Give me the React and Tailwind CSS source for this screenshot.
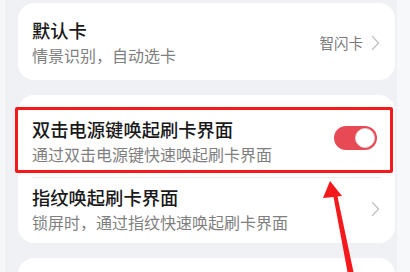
// App.jsx — payment card settings (默认卡 / 刷卡界面)

const font = { fontFamily: '"Noto Sans CJK SC", "Noto Sans", sans-serif' };

// ── Chevron ───────────────────────────────────────────────────────────────────
function Chevron() {
  return (
    <svg className="w-[9px] h-[16px] flex-shrink-0" viewBox="0 0 9 16" fill="none">
      <path
        d="M1.5 1.5L7.5 8L1.5 14.5"
        stroke="#c4c4c4"
        strokeWidth="1.4"
        strokeLinecap="round"
        strokeLinejoin="round"
      />
    </svg>
  );
}

// ── Text block ────────────────────────────────────────────────────────────────
function Texts({ title, sub }) {
  return (
    <div className="flex flex-col gap-[2px]">
      <p className="text-[18.3px] leading-[24px] font-medium text-[#191919]">{title}</p>
      <p className="text-[16px] leading-[22px] text-[#7f7f7f]">{sub}</p>
    </div>
  );
}

export default function App() {
  return (
    <div
      style={font}
      className="relative w-[410px] h-[272px] overflow-hidden pl-[18px] pr-[15px] pt-[3px] flex flex-col gap-[15px]
        bg-[linear-gradient(to_right,#f6f7f9_5px,#eff1f4_5px,#eff1f4_397px,#f7f8fa_397px)]"
    >
      {/* Card 1 */}
      <div className="h-[77px] flex-shrink-0 rounded-[16px] bg-white flex items-center justify-between pl-[14px] pr-[15px]">
        <Texts title="默认卡" sub="情景识别，自动选卡" />
        <div className="flex items-center gap-[8px] mt-[2px]">
          <span className="text-[14.5px] text-[#7a7a7a]">智闪卡</span>
          <Chevron />
        </div>
      </div>

      {/* Card 2 */}
      <div className="relative h-[148px] flex-shrink-0 rounded-[16px] bg-white flex flex-col">
        <div className="h-[82px] flex items-start justify-between pl-[14px] pr-[18px] pt-[22px]">
          <Texts title="双击电源键唤起刷卡界面" sub="通过双击电源键快速唤起刷卡界面" />
          <div className="mt-[9px] w-[43px] h-[24px] rounded-full bg-[#e84a55] flex items-center justify-end pr-[2px]">
            <div className="w-[20px] h-[20px] rounded-full bg-white border border-[#d9d9d9]" />
          </div>
        </div>
        <div className="mx-[14px] h-px bg-[#ececec]" />
        <div className="flex-1 flex items-center justify-between pl-[14px] pr-[15px] pb-[4px]">
          <Texts title="指纹唤起刷卡界面" sub="锁屏时，通过指纹快速唤起刷卡界面" />
          <Chevron />
        </div>

        {/* Highlight box */}
        <div className="absolute left-[-3px] top-[12px] w-[378px] h-[66px] border-[3px] border-[#f5191c] rounded-[2px]" />
      </div>

      {/* Card 3 */}
      <div className="h-[40px] flex-shrink-0 rounded-t-[16px] bg-white" />

      {/* Arrow */}
      <svg className="absolute left-0 top-0 w-[410px] h-[272px] pointer-events-none" viewBox="0 0 410 272">
        <polygon points="330,181 342,196 337.5,196.5 353.5,272 347.5,272 333.5,197 323,198" fill="#f5191c" />
      </svg>
    </div>
  );
}
